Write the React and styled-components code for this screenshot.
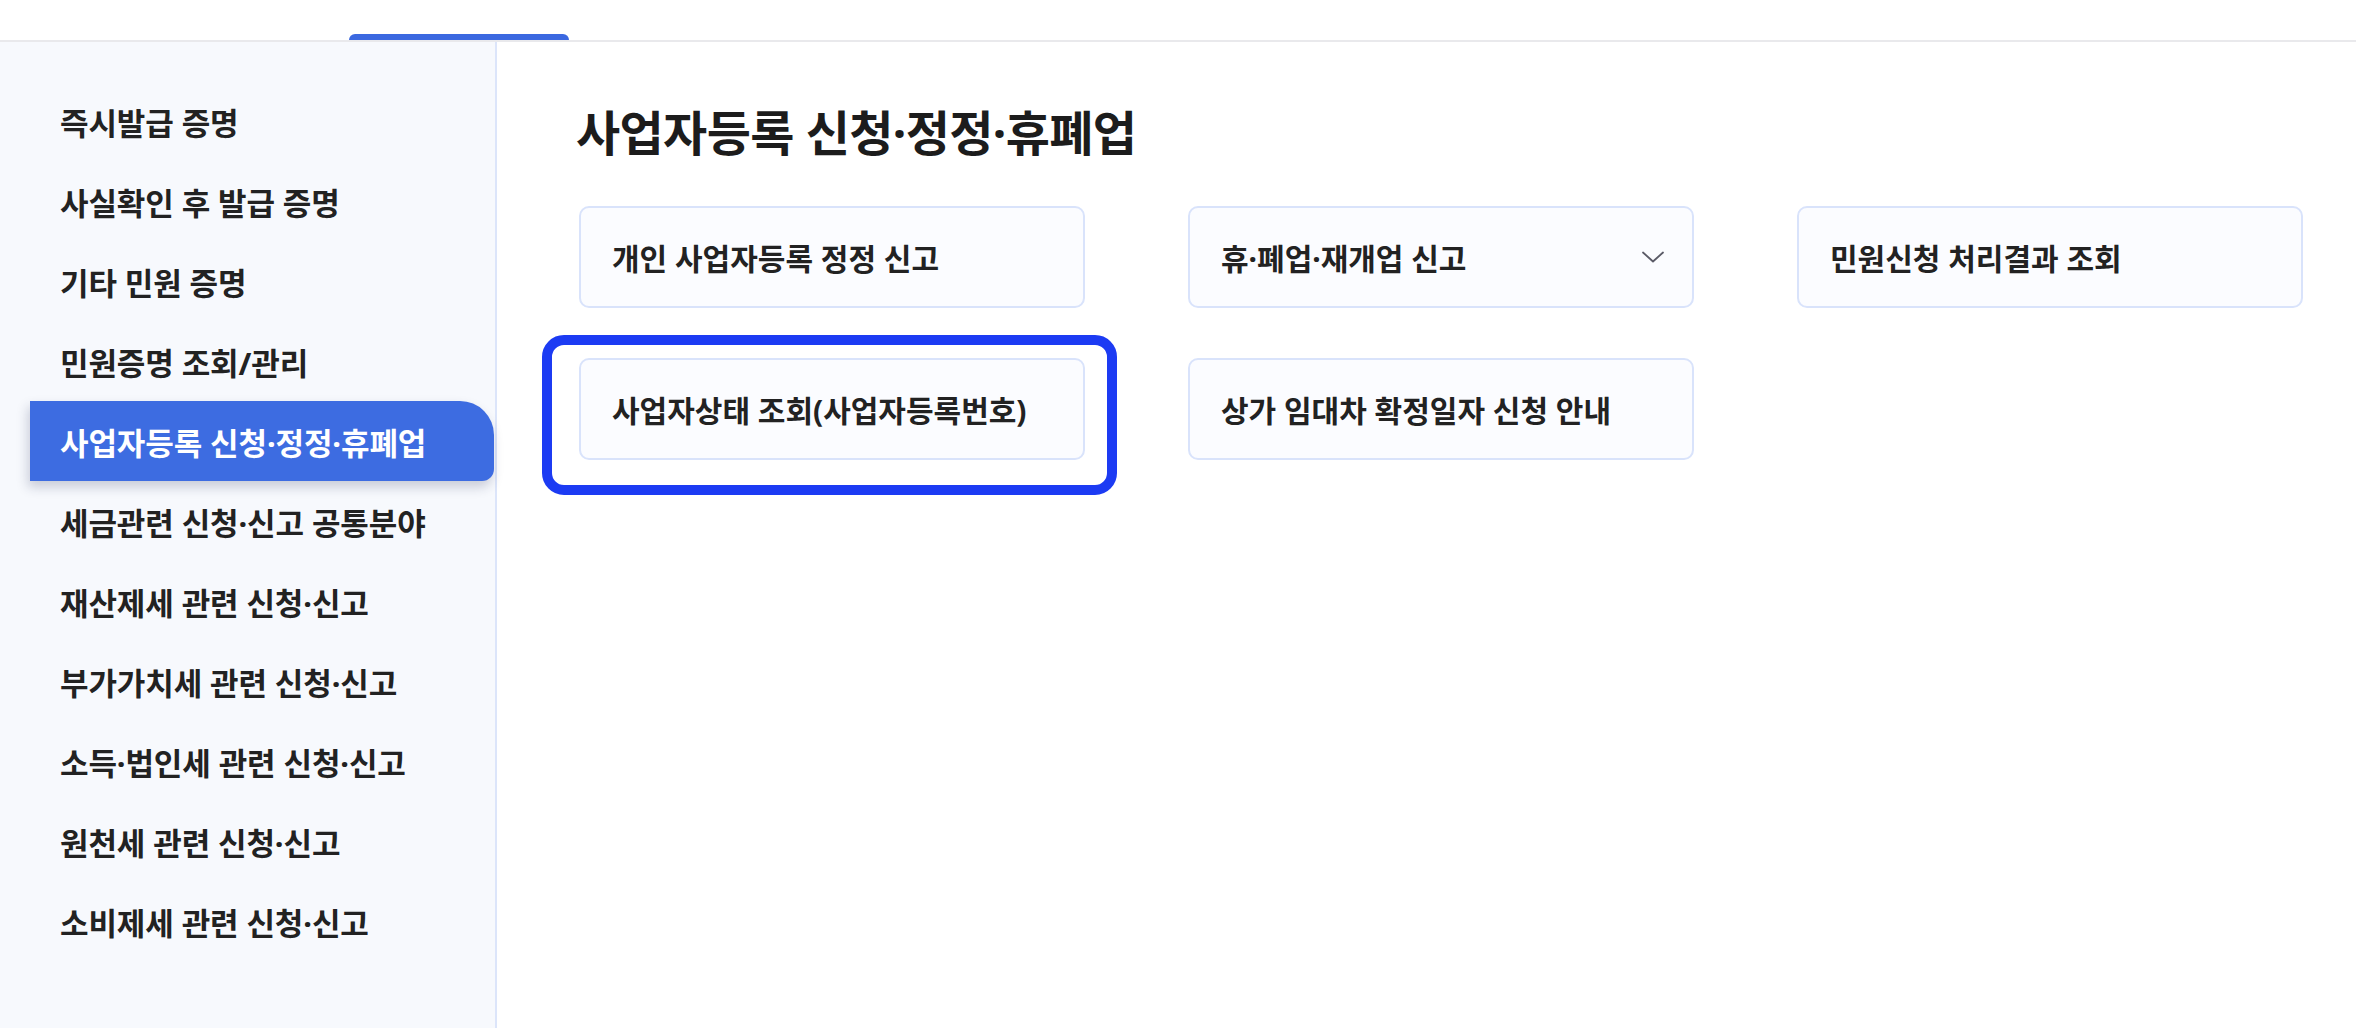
import React from "react";
import styled, { createGlobalStyle } from "styled-components";

const Global = createGlobalStyle`
  html, body { margin: 0; padding: 0; background: #ffffff; }
  body { font-family: "Noto Sans", "Noto Sans CJK KR", sans-serif; color: #1e1e1e; }
  * { box-sizing: border-box; }
`;

const Page = styled.div`
  width: 2356px;
  height: 1028px;
  display: flex;
  flex-direction: column;
  overflow: hidden;
`;

const TopBar = styled.div`
  height: 42px;
  flex: none;
  display: flex;
  align-items: flex-end;
  padding-left: 349px;
  border-bottom: 2px solid #e9e9ec;
  background: #fff;
`;

const TabIndicator = styled.div`
  width: 220px;
  height: 6px;
  border-radius: 6px 6px 0 0;
  background: #3b68e0;
`;

const Body = styled.div`
  flex: 1;
  display: flex;
  min-height: 0;
`;

const Sidebar = styled.nav`
  width: 497px;
  flex: none;
  background: #f7f9fd;
  border-right: 2px solid #dce5fa;
  padding-top: 39px;
`;

const MenuList = styled.ul`
  list-style: none;
  margin: 0 0 0 30px;
  padding: 0;
`;

const MenuItem = styled.li`
  height: 80px;
  display: flex;
  align-items: center;
  padding-left: 30px;
  font-size: 31px;
  font-weight: 700;
  letter-spacing: -0.1px;
  color: ${(p) => (p.$active ? "#ffffff" : "#222222")};
  background: ${(p) => (p.$active ? "#3d6ce1" : "transparent")};
  border-radius: ${(p) => (p.$active ? "0 34px 12px 0" : "0")};
  box-shadow: ${(p) => (p.$active ? "-2px 6px 12px rgba(30, 40, 80, 0.22)" : "none")};
  margin-right: ${(p) => (p.$active ? "1px" : "0")};
`;

const Main = styled.main`
  flex: 1;
  padding: 59px 0 0 79px;
`;

const Title = styled.h1`
  margin: 0;
  height: 63px;
  line-height: 63px;
  font-size: 48px;
  font-weight: 700;
  letter-spacing: -0.6px;
  color: #1c1c1c;
`;

const CardGrid = styled.div`
  margin-top: 42px;
  margin-left: 3px;
  display: grid;
  grid-template-columns: repeat(3, 506px);
  column-gap: 103px;
  row-gap: 50px;
`;

const Card = styled.div`
  position: relative;
  height: 102px;
  display: flex;
  align-items: center;
  justify-content: space-between;
  padding: 0 28px 0 31px;
  background: #fbfcff;
  border: 2px solid #d9e3fb;
  border-radius: 10px;
  font-size: 30px;
  font-weight: 700;
  letter-spacing: 0;
  color: #222222;
`;

const Highlight = styled.div`
  position: absolute;
  left: -39px;
  top: -25px;
  width: 575px;
  height: 160px;
  border: 10px solid #1c3bf3;
  border-radius: 22px;
  pointer-events: none;
`;

const Chevron = () => (
  <svg width="22" height="12" viewBox="0 0 22 12" fill="none">
    <path d="M1 1.5 L11 10.5 L21 1.5" stroke="#5a5a66" strokeWidth="1.8" strokeLinecap="round" strokeLinejoin="round" />
  </svg>
);

const menu = [
  "즉시발급 증명",
  "사실확인 후 발급 증명",
  "기타 민원 증명",
  "민원증명 조회/관리",
  "사업자등록 신청·정정·휴폐업",
  "세금관련 신청·신고 공통분야",
  "재산제세 관련 신청·신고",
  "부가가치세 관련 신청·신고",
  "소득·법인세 관련 신청·신고",
  "원천세 관련 신청·신고",
  "소비제세 관련 신청·신고",
];

const cards = [
  { label: "개인 사업자등록 정정 신고" },
  { label: "휴·폐업·재개업 신고", dropdown: true },
  { label: "민원신청 처리결과 조회" },
  { label: "사업자상태 조회(사업자등록번호)", highlight: true },
  { label: "상가 임대차 확정일자 신청 안내" },
];

export default function App() {
  return (
    <Page>
      <Global />
      <TopBar>
        <TabIndicator />
      </TopBar>
      <Body>
        <Sidebar>
          <MenuList>
            {menu.map((m, i) => (
              <MenuItem key={m} $active={i === 4}>
                {m}
              </MenuItem>
            ))}
          </MenuList>
        </Sidebar>
        <Main>
          <Title>사업자등록 신청·정정·휴폐업</Title>
          <CardGrid>
            {cards.map((c) => (
              <Card key={c.label}>
                <span>{c.label}</span>
                {c.dropdown && <Chevron />}
                {c.highlight && <Highlight />}
              </Card>
            ))}
          </CardGrid>
        </Main>
      </Body>
    </Page>
  );
}
